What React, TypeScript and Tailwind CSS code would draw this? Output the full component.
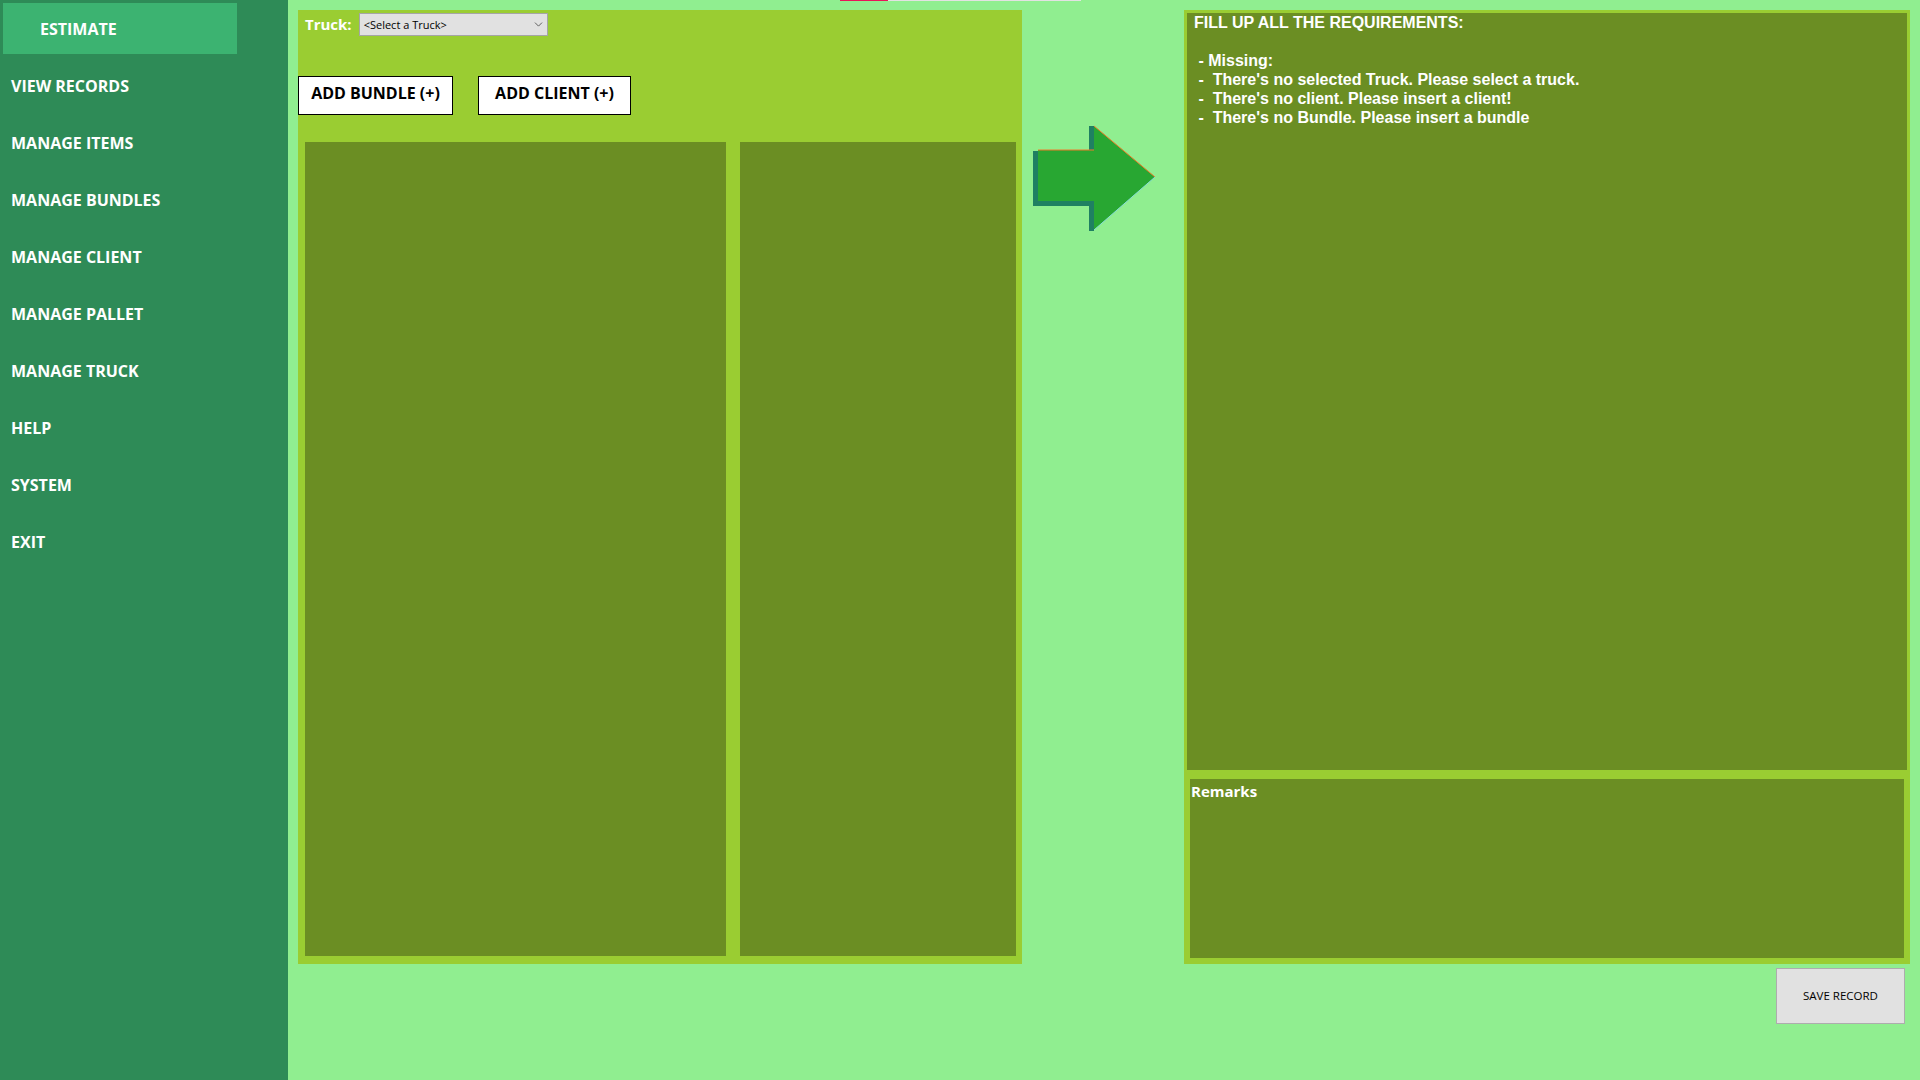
import { ChevronDown } from 'lucide-react';

const menu = [
  'VIEW RECORDS',
  'MANAGE ITEMS',
  'MANAGE BUNDLES',
  'MANAGE CLIENT',
  'MANAGE PALLET',
  'MANAGE TRUCK',
  'HELP',
  'SYSTEM',
  'EXIT',
];

const requirements = [
  'FILL UP ALL THE REQUIREMENTS:',
  ' ',
  ' - Missing:',
  " -  There's no selected Truck. Please select a truck.",
  " -  There's no client. Please insert a client!",
  " -  There's no Bundle. Please insert a bundle",
];

const Arrow = () => (
  <svg width="128" height="110" viewBox="0 0 128 110">
    {/* shadow edge */}
    <polygon points="3,27 59,27 59,2 64,2 64,107 59,107 59,82 3,82" fill="#1f8062" />
    {/* body */}
    <polygon points="8,26 64,26 64,2 125,53 64,106 64,77 8,77" fill="#28a732" />
    <polyline points="8,26 64,26" fill="none" stroke="#f07a28" strokeWidth="1" />
    <polyline points="64,2 125,53" fill="none" stroke="#f07a28" strokeWidth="1" />
    <polyline points="125,53 64,106" fill="none" stroke="#86dcd8" strokeWidth="1" />
  </svg>
);

const App = () => {
  return (
    <div className="flex w-[1920px] h-[1080px] overflow-hidden font-['Open_Sans',sans-serif]">
      {/* Sidebar */}
      <div className="w-[288px] h-full bg-[#2e8b57] flex flex-col">
        <div className="h-[57px] pt-[3px] pl-[3px]">
          <div className="w-[234px] h-[51px] bg-[#3cb371] flex items-center pl-[37px] text-white text-[16px] font-bold">
            ESTIMATE
          </div>
        </div>
        {menu.map((item) => (
          <div key={item} className="h-[57px] flex items-center pl-[11px] text-white text-[16px] font-bold">
            {item}
          </div>
        ))}
      </div>

      {/* Main */}
      <div className="flex-1 relative bg-[#90ee90] flex flex-col pt-[10px] pl-[10px] pr-[10px]">
        <div className="absolute top-0 left-[552px] flex h-[1px]">
          <div className="w-[48px] h-full bg-[#e8155a]" />
          <div className="w-[193px] h-full bg-[#e2e2e2]" />
        </div>

        <div className="flex items-start">
          {/* Left panel */}
          <div className="w-[724px] h-[954px] bg-[#9acd32] flex flex-col">
            <div className="mt-[3px] h-[23px] flex items-center pl-[7px] gap-[7px]">
              <span className="text-white text-[15px] font-bold leading-none">Truck:</span>
              <div className="w-[189px] h-[23px] bg-[#e1e1e1] border border-[#a5a5a5] flex items-center justify-between pl-[4px] pr-[2px]">
                <span className="text-[11px] text-black leading-none">&lt;Select a Truck&gt;</span>
                <ChevronDown className="w-[13px] h-[13px] text-[#444]" strokeWidth={1.5} />
              </div>
            </div>

            <div className="mt-[40px] flex gap-[25px]">
              <button className="w-[155px] h-[39px] pb-[6px] bg-white border border-black text-black text-[16px] font-bold">
                ADD BUNDLE (+)
              </button>
              <button className="w-[153px] h-[39px] pb-[6px] bg-white border border-black text-black text-[16px] font-bold">
                ADD CLIENT (+)
              </button>
            </div>

            <div className="mt-[27px] flex-1 flex gap-[14px] pl-[7px] pr-[6px] pb-[8px]">
              <div className="w-[421px] bg-[#6b8e23]" />
              <div className="flex-1 bg-[#6b8e23]" />
            </div>
          </div>

          {/* Arrow */}
          <div className="w-[162px] pt-[114px] pl-[8px]">
            <Arrow />
          </div>

          {/* Right panel */}
          <div className="w-[726px] h-[954px] bg-[#9acd32] flex flex-col pt-[3px] px-[3px] pb-[6px]">
            <div className="h-[757px] bg-[#6b8e23] pl-[7px] text-white text-[16px] font-bold leading-[19px] font-['Liberation_Sans',Arial,sans-serif]">
              {requirements.map((line, i) => (
                <div key={i} className="whitespace-pre">
                  {line}
                </div>
              ))}
            </div>
            <div className="mt-[9px] mx-[3px] flex-1 bg-[#6b8e23] pl-[1px]">
              <span className="text-white text-[15px] font-bold leading-[19px]">Remarks</span>
            </div>
          </div>
        </div>

        <div className="flex justify-end pr-[5px] mt-[4px]">
          <button className="w-[129px] h-[56px] bg-[#e1e1e1] border border-[#adadad] text-black text-[11.5px]">
            SAVE RECORD
          </button>
        </div>
      </div>
    </div>
  );
};

export default App;
